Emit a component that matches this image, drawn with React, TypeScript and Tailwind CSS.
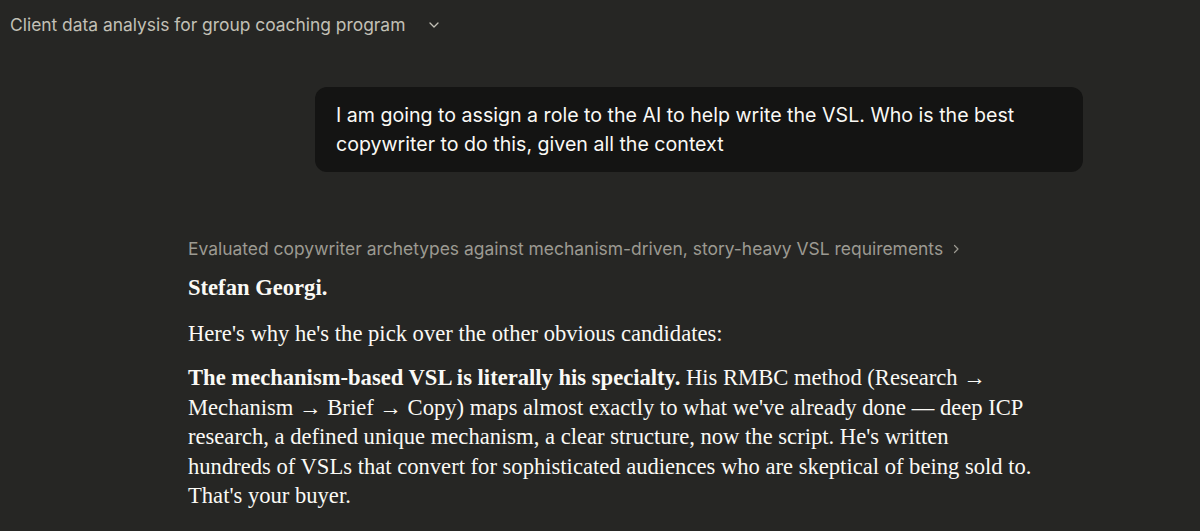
import React from "react";

const sans = { fontFamily: "Inter, 'Noto Sans', sans-serif" };

export default function App() {
  return (
    <div className="w-[1200px] h-[531px] overflow-hidden bg-[#262624] text-[#faf9f5]">
      <div className="flex items-center h-[50px] pl-[10px]" style={sans}>
        <span className="text-[17.4px] text-[#c2c0b6]">Client data analysis for group coaching program</span>
        <svg className="ml-[22px]" width="14" height="14" viewBox="0 0 14 14" fill="none" stroke="#c2c0b6" strokeWidth="1.3" strokeLinecap="round" strokeLinejoin="round">
          <path d="M3 5l4 4 4-4" />
        </svg>
      </div>
      <div className="flex justify-end pr-[117px] mt-[37px]">
        <div className="w-[768px] rounded-[12px] bg-[#141413] pl-[21px] pr-[16px] pt-[14px] pb-[13px] text-[19.6px] leading-[29px] text-[#faf9f5]" style={sans}>
          I am going to assign a role to the AI to help write the VSL. Who is the best copywriter to do this, given all the context
        </div>
      </div>
      <div className="pl-[188px] mt-[64px]">
        <div className="flex items-center text-[17.45px] leading-[26px] text-[#9c9a92]" style={sans}>
          <span>Evaluated copywriter archetypes against mechanism-driven, story-heavy VSL requirements</span>
          <svg className="ml-[7px]" width="12" height="12" viewBox="0 0 12 12" fill="none" stroke="#9c9a92" strokeWidth="1.2" strokeLinecap="round" strokeLinejoin="round">
            <path d="M4.5 2.5l3.5 3.5-3.5 3.5" />
          </svg>
        </div>
        <div className="w-[845px] text-[22.6px] leading-[29.5px]" style={{ fontFamily: "'Liberation Serif', serif" }}>
          <p className="mt-[10.5px] font-bold">Stefan Georgi.</p>
          <p className="mt-[17px]">Here's why he's the pick over the other obvious candidates:</p>
          <p className="mt-[14.5px]">
            <b>The mechanism-based VSL is literally his specialty.</b> His RMBC method (Research → Mechanism → Brief → Copy) maps almost exactly to what we've already done — deep ICP research, a defined unique mechanism, a clear structure, now the script. He's written hundreds of VSLs that convert for sophisticated audiences who are skeptical of being sold to. That's your buyer.
          </p>
        </div>
      </div>
    </div>
  );
}
